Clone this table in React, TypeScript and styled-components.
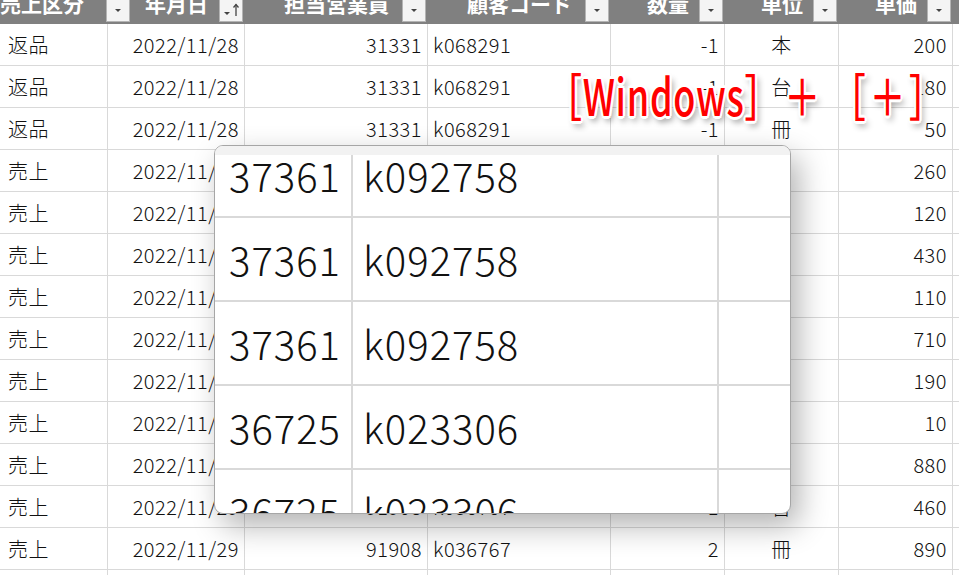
import React from "react";
import styled, { createGlobalStyle } from "styled-components";

type Align = "left" | "right" | "center";

interface Column {
  label: string;
  width: number;
  align: Align;
  pad?: number;
  shift?: number;
  sort?: boolean;
}

const columns: Column[] = [
  { label: "売上区分", width: 108, align: "left", pad: 8, shift: 48 },
  { label: "年月日", width: 137, align: "right", sort: true },
  { label: "担当営業員", width: 183, align: "right" },
  { label: "顧客コード", width: 183, align: "left" },
  { label: "数量", width: 114, align: "right" },
  { label: "単位", width: 114, align: "center" },
  { label: "単価", width: 114, align: "right" },
];

const rows: string[][] = [
  ["返品", "2022/11/28", "31331", "k068291", "-1", "本", "200"],
  ["返品", "2022/11/28", "31331", "k068291", "-1", "台", "180"],
  ["返品", "2022/11/28", "31331", "k068291", "-1", "冊", "50"],
  ["売上", "2022/11/28", "37361", "k092758", "1", "本", "260"],
  ["売上", "2022/11/28", "37361", "k092758", "1", "台", "120"],
  ["売上", "2022/11/28", "37361", "k092758", "2", "本", "430"],
  ["売上", "2022/11/28", "36725", "k023306", "1", "冊", "110"],
  ["売上", "2022/11/28", "36725", "k023306", "3", "台", "710"],
  ["売上", "2022/11/29", "36725", "k023306", "1", "本", "190"],
  ["売上", "2022/11/29", "84210", "k051120", "4", "本", "10"],
  ["売上", "2022/11/29", "84210", "k051120", "1", "冊", "880"],
  ["売上", "2022/11/29", "91908", "k036767", "1", "台", "460"],
  ["売上", "2022/11/29", "91908", "k036767", "2", "冊", "890"],
  ["売上", "2022/11/29", "91908", "k036767", "1", "本", "340"],
];

// what the magnifier lens shows: 担当営業員 / 顧客コード / 数量, at 2x
const lensColumns = columns.slice(2, 5);
const lensRows: string[][] = [
  ["37361", "k092758", "1"],
  ["37361", "k092758", "1"],
  ["37361", "k092758", "2"],
  ["36725", "k023306", "1"],
  ["36725", "k023306", "3"],
];

const GlobalStyle = createGlobalStyle`
  html, body {
    margin: 0;
    padding: 0;
    background: #fff;
    overflow: hidden;
  }
  body {
    font-family: "Noto Sans CJK JP", "Noto Sans", sans-serif;
  }
`;

const Screen = styled.div`
  position: relative;
  width: 959px;
  height: 575px;
  overflow: hidden;
  background: #fff;
`;

const Sheet = styled.div`
  display: flex;
  flex-direction: column;
  margin-top: -18px;
`;

const HeaderRow = styled.div`
  display: flex;
  height: 42px;
  background: #808080;
`;

const HeaderCell = styled.div<{ $w: number }>`
  flex: none;
  width: ${(p) => p.$w}px;
  display: grid;
`;

const HeaderLabel = styled.div<{ $shift: number }>`
  grid-area: 1 / 1;
  display: flex;
  justify-content: center;
  align-items: center;
  span {
    margin-right: ${(p) => p.$shift}px;
    color: #fff;
    font-size: 21px;
    font-weight: 700;
    white-space: nowrap;
  }
`;

const FilterButton = styled.div`
  grid-area: 1 / 1;
  justify-self: end;
  align-self: end;
  margin: 0 2px 2px 0;
  width: 24px;
  height: 24px;
  box-sizing: border-box;
  border: 1px solid #b4b4b4;
  background: #f4f4f4;
  display: flex;
  svg {
    width: 22px;
    height: 22px;
  }
`;

const Row = styled.div`
  display: flex;
  height: 42px;
`;

const Cell = styled.div<{ $w: number; $align: Align; $pad: number }>`
  flex: none;
  width: ${(p) => p.$w}px;
  box-sizing: border-box;
  border-right: 1px solid #d9d9d9;
  border-bottom: 1px solid #d9d9d9;
  display: flex;
  align-items: center;
  justify-content: ${(p) =>
    p.$align === "left" ? "flex-start" : p.$align === "right" ? "flex-end" : "center"};
  padding: 0 5px 0 ${(p) => p.$pad}px;
  font-size: 20px;
  font-weight: 300;
  letter-spacing: 0.5px;
  color: #111;
  white-space: nowrap;
  overflow: hidden;
`;

const Filler = styled.div`
  flex: 1;
  border-bottom: 1px solid #d9d9d9;
`;

const Lens = styled.div`
  position: absolute;
  left: 214px;
  top: 145px;
  width: 577px;
  height: 369px;
  box-sizing: border-box;
  border: 1px solid #a6a6a6;
  border-radius: 9px;
  overflow: hidden;
  background: #fff;
  display: flex;
  flex-direction: column;
  box-shadow: 8px 12px 30px rgba(0, 0, 0, 0.3);
`;

const LensBar = styled.div`
  flex: none;
  height: 9px;
  background: #f2f2f2;
`;

const LensView = styled.div`
  flex: 1;
  overflow: hidden;
`;

const LensSheet = styled.div`
  display: flex;
  flex-direction: column;
  width: max-content;
  margin: -21px 0 0 -228px;
  transform-origin: 0 0;
  transform: scale(2);
`;

const Caption = styled.div`
  position: absolute;
  left: 546px;
  top: 69px;
  font-family: "Noto Sans CJK JP", sans-serif;
  font-size: 50px;
  font-weight: 500;
  line-height: 1;
  letter-spacing: 1px;
  color: #ff0000;
  white-space: pre;
  transform: scaleX(0.72);
  transform-origin: 0 0;
  text-shadow: 3px 0 #fff, -3px 0 #fff, 0 3px #fff, 0 -3px #fff, 2px 2px #fff,
    -2px -2px #fff, 2px -2px #fff, -2px 2px #fff, 4px 5px 7px rgba(0, 0, 0, 0.45);
`;

function FilterIcon({ sort }: { sort?: boolean }) {
  if (sort) {
    return (
      <svg viewBox="0 0 22 22">
        <polygon points="4,13 10,13 7,16" fill="#444" />
        <line x1="16" y1="5.5" x2="16" y2="17" stroke="#444" strokeWidth="1.3" />
        <polyline points="13.5,8.5 16,5.5 18.5,8.5" fill="none" stroke="#444" strokeWidth="1.3" />
      </svg>
    );
  }
  return (
    <svg viewBox="0 0 22 22">
      <polygon points="8,10 14,10 11,13" fill="#444" />
    </svg>
  );
}

function DataRow({ cols, values }: { cols: Column[]; values: string[] }) {
  return (
    <Row>
      {cols.map((c, i) => (
        <Cell key={i} $w={c.width} $align={c.align} $pad={c.pad ?? 5}>
          {values[i]}
        </Cell>
      ))}
    </Row>
  );
}

export default function App() {
  return (
    <Screen>
      <GlobalStyle />
      <Sheet>
        <HeaderRow>
          {columns.map((c) => (
            <HeaderCell key={c.label} $w={c.width}>
              <HeaderLabel $shift={c.shift ?? 0}>
                <span>{c.label}</span>
              </HeaderLabel>
              <FilterButton>
                <FilterIcon sort={c.sort} />
              </FilterButton>
            </HeaderCell>
          ))}
        </HeaderRow>
        {rows.map((r, i) => (
          <Row key={i}>
            {columns.map((c, j) => (
              <Cell key={j} $w={c.width} $align={c.align} $pad={c.pad ?? 5}>
                {r[j]}
              </Cell>
            ))}
            <Filler />
          </Row>
        ))}
      </Sheet>

      <Lens>
        <LensBar />
        <LensView>
          <LensSheet>
            {lensRows.map((r, i) => (
              <DataRow key={i} cols={lensColumns} values={r} />
            ))}
          </LensSheet>
        </LensView>
      </Lens>

      <Caption>{"［Windows］\u200a＋ ［\u200a＋\u200a］"}</Caption>
    </Screen>
  );
}
